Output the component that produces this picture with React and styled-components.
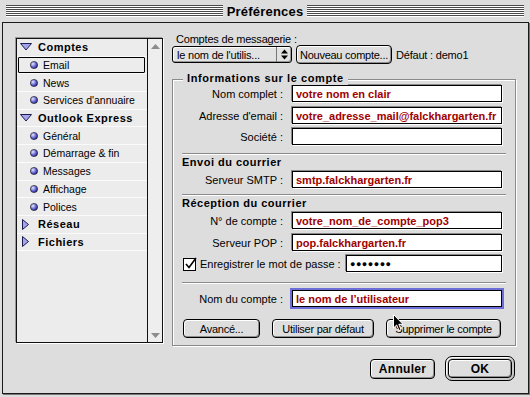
import React from 'react';
import styled, { createGlobalStyle } from 'styled-components';

const GlobalStyle = createGlobalStyle`
  body {
    margin: 0;
    background: #dddddd;
    font-family: "Liberation Sans", Arial, sans-serif;
    font-size: 11px;
    color: #000;
  }
  * { box-sizing: border-box; }
`;

const Window = styled.div`
  position: relative;
  width: 530px;
  height: 397px;
  background: #dddddd;
  overflow: hidden;
`;

const TitleBar = styled.div`
  height: 22px;
  display: flex;
  align-items: center;
  gap: 4px;
  padding: 0 6px;
`;

const Stripes = styled.div`
  flex: 1;
  height: 12px;
  background: repeating-linear-gradient(to bottom, #4a4a4a 0 1px, #ffffff 1px 2px);
`;

const Title = styled.div`
  font-weight: bold;
  font-size: 13px;
  letter-spacing: 0.2px;
`;

const Body = styled.div`
  margin-left: 2px;
  width: 527px;
  height: 372px;
  border: 1px solid #1a1a1a;
  box-shadow: 1px 1px 0 #777;
  padding: 10px 12px 12px 13px;
  display: flex;
  flex-direction: column;
`;

const Main = styled.div`
  display: flex;
  gap: 9px;
  height: 313px;
`;

const ListBox = styled.div`
  margin-top: 5px;
  width: 147px;
  height: 305px;
  border: 1px solid #111;
  display: flex;
  box-shadow: 1px 1px 0 #fff, -1px -1px 0 #9a9a9a;
`;

const ListRows = styled.div`
  flex: 1;
  background: #ececec;
  display: flex;
  flex-direction: column;
`;

const Row = styled.div`
  height: 17.7px;
  border-bottom: 1px solid #fbfbfb;
  display: flex;
  align-items: center;
  padding: 0 2px 0 1px;
`;

const RowInner = styled.div`
  flex: 1;
  height: 16px;
  display: flex;
  align-items: center;
  padding-left: 1px;
  border: 1px solid ${p => (p.$selected ? '#000' : 'transparent')};
  border-radius: 1px;
  font-weight: ${p => (p.$header ? 'bold' : 'normal')};
  font-size: ${p => (p.$header ? '11px' : '10.5px')};
  letter-spacing: ${p => (p.$header ? '0.5px' : '0')};
`;

const IconSlot = styled.div`
  width: ${p => p.$w}px;
  padding-left: ${p => p.$pad}px;
  display: flex;
  align-items: center;
`;

const Scrollbar = styled.div`
  width: 15px;
  border-left: 1px solid #111;
  background: #eeeeee;
  display: flex;
  flex-direction: column;
  justify-content: space-between;
`;

const ArrowBox = styled.div`
  height: 14px;
  display: flex;
  align-items: center;
  justify-content: center;
`;

const RightPanel = styled.div`
  width: 344px;
  display: flex;
  flex-direction: column;
`;

const TopLabel = styled.div`
  height: 12px;
  line-height: 12px;
  padding-left: 4px;
  letter-spacing: -0.2px;
`;

const AccountRow = styled.div`
  height: 19px;
  display: flex;
  align-items: center;
  gap: 4px;
`;

const Popup = styled.div`
  width: 120px;
  height: 17px;
  border: 1px solid #000;
  border-radius: 3px;
  background: #e2e2e2;
  box-shadow: inset 1px 1px 0 #fff, inset -1px -1px 0 #999;
  display: flex;
  align-items: center;
`;

const PopupText = styled.div`
  flex: 1;
  padding-left: 4px;
  white-space: nowrap;
  overflow: hidden;
  letter-spacing: -0.2px;
`;

const PopupArrows = styled.div`
  width: 15px;
  height: 100%;
  border-left: 1px solid #777;
  display: flex;
  align-items: center;
  justify-content: center;
`;

const Button = styled.div`
  width: ${p => p.$w}px;
  height: ${p => p.$h || 19}px;
  border: 1px solid #000;
  border-radius: 4px;
  background: #dedede;
  box-shadow: inset 1px 1px 0 #fff, inset -1px -1px 0 #8f8f8f;
  display: flex;
  align-items: center;
  justify-content: center;
  white-space: nowrap;
  font-weight: ${p => (p.$bold ? 'bold' : 'normal')};
  font-size: ${p => (p.$bold ? '12px' : '11px')};
  letter-spacing: ${p => (p.$bold ? '0.3px' : '-0.25px')};
`;

const DefaultText = styled.span`
  letter-spacing: -0.2px;
`;

const DefaultRing = styled.div`
  width: 70px;
  height: 25px;
  border: 1px solid #000;
  border-radius: 7px;
  padding: 2px;
  background: #c8c8c8;
  box-shadow: inset 1px 1px 0 #fff;
  display: flex;
`;

const GroupBox = styled.div`
  position: relative;
  margin-top: 15px;
  height: 267px;
  border: 1px solid #8a8a8a;
  box-shadow: inset 1px 1px 0 #fff, 1px 1px 0 #fff;
  padding: 5px 9px 7px 9px;
  display: flex;
  flex-direction: column;
`;

const GroupTitle = styled.div`
  position: absolute;
  top: -8px;
  left: 10px;
  padding: 0 4px;
  background: #dddddd;
  font-weight: bold;
  letter-spacing: 0.6px;
  line-height: 13px;
`;

const FieldRow = styled.div`
  display: grid;
  grid-template-columns: 101px 1fr;
  column-gap: 9px;
  align-items: center;
  height: 17px;
  padding-right: 4px;
  margin-top: ${p => p.$mt || 0}px;
`;

const Label = styled.div`
  text-align: right;
  white-space: nowrap;
`;

const Field = styled.div`
  height: 17px;
  border: 1px solid #000;
  background: #fff;
  box-shadow: ${p => (p.$focus ? '0 0 0 2px #6e6ed8' : '-1px -1px 0 #888, 1px 1px 0 #fff')};
  color: #a00000;
  font-weight: bold;
  padding-left: 3px;
  display: flex;
  align-items: center;
  white-space: nowrap;
  overflow: hidden;
  width: ${p => (p.$w ? `${p.$w}px` : 'auto')};
`;

const Separator = styled.div`
  height: 2px;
  border-top: 1px solid #8a8a8a;
  border-bottom: 1px solid #fff;
  margin-top: ${p => p.$mt}px;
`;

const SectionHead = styled.div`
  height: 13px;
  line-height: 13px;
  font-weight: bold;
  letter-spacing: 0.5px;
  margin: 1px 0 2px;
`;

const CheckRow = styled.div`
  display: flex;
  align-items: center;
  height: 17px;
  margin-top: 4px;
  padding: 0 4px 0 1px;
  gap: 3px;
`;

const Password = styled(Field)`
  color: #000;
  font-size: 9px;
  letter-spacing: 0.5px;
  margin-left: auto;
`;

const ButtonRow = styled.div`
  display: flex;
  justify-content: space-between;
  margin-top: 12px;
  padding: 0 5px 0 1px;
`;

const Footer = styled.div`
  display: flex;
  justify-content: flex-end;
  align-items: center;
  gap: 10px;
  margin-top: 10px;
  height: 25px;
  padding-right: 1px;
`;

const Cursor = styled.svg`
  position: absolute;
  left: 393px;
  top: 314px;
`;

const DownTriangle = () => (
  <svg width="12" height="8" viewBox="0 0 12 8">
    <polygon points="0.5,0.5 11.5,0.5 6,7" fill="#a4a4ec" stroke="#1c1c50" strokeWidth="1" />
  </svg>
);

const RightTriangle = () => (
  <svg width="7" height="11" viewBox="0 0 7 11">
    <polygon points="0.5,0.5 6.5,5.5 0.5,10.5" fill="#a4a4ec" stroke="#1c1c50" strokeWidth="1" />
  </svg>
);

const Ball = () => (
  <svg width="8" height="8" viewBox="0 0 8 8">
    <defs>
      <radialGradient id="ballg" cx="0.35" cy="0.35" r="0.7">
        <stop offset="0" stopColor="#e8e8ff" />
        <stop offset="0.5" stopColor="#7777dd" />
        <stop offset="1" stopColor="#222288" />
      </radialGradient>
    </defs>
    <circle cx="4" cy="4" r="3.6" fill="url(#ballg)" stroke="#111" strokeWidth="0.6" />
  </svg>
);

const Checkbox = () => (
  <svg width="14" height="14" viewBox="0 0 14 14">
    <rect x="0.5" y="1.5" width="12" height="12" fill="#fff" stroke="#000" />
    <path d="M3 7 L6 10.5 L13 1" fill="none" stroke="#000" strokeWidth="1.6" />
  </svg>
);

const UpDown = () => (
  <svg width="7" height="11" viewBox="0 0 7 11">
    <polygon points="3.5,0.5 7,4.5 0,4.5" fill="#000" />
    <polygon points="0,6.5 7,6.5 3.5,10.5" fill="#000" />
  </svg>
);

const ScrollArrow = ({ down }) => (
  <svg width="9" height="5" viewBox="0 0 9 5">
    <polygon points={down ? '0,0 9,0 4.5,5' : '0,5 9,5 4.5,0'} fill="#8c8c8c" />
  </svg>
);

const listItems = [
  { label: 'Comptes', kind: 'open' },
  { label: 'Email', kind: 'item', selected: true },
  { label: 'News', kind: 'item' },
  { label: "Services d'annuaire", kind: 'item' },
  { label: 'Outlook Express', kind: 'open' },
  { label: 'Général', kind: 'item' },
  { label: 'Démarrage & fin', kind: 'item' },
  { label: 'Messages', kind: 'item' },
  { label: 'Affichage', kind: 'item' },
  { label: 'Polices', kind: 'item' },
  { label: 'Réseau', kind: 'closed' },
  { label: 'Fichiers', kind: 'closed' },
];

const ListItem = ({ item }) => {
  const header = item.kind !== 'item';
  let icon;
  if (item.kind === 'open') icon = <IconSlot $w={18} $pad={0}><DownTriangle /></IconSlot>;
  else if (item.kind === 'closed') icon = <IconSlot $w={18} $pad={2}><RightTriangle /></IconSlot>;
  else icon = <IconSlot $w={23} $pad={10}><Ball /></IconSlot>;
  return (
    <Row>
      <RowInner $header={header} $selected={item.selected}>
        {icon}
        {item.label}
      </RowInner>
    </Row>
  );
};

export default function App() {
  return (
    <Window>
      <GlobalStyle />
      <TitleBar>
        <Stripes />
        <Title>Préférences</Title>
        <Stripes />
      </TitleBar>
      <Body>
        <Main>
          <ListBox>
            <ListRows>
              {listItems.map(item => (
                <ListItem key={item.label} item={item} />
              ))}
            </ListRows>
            <Scrollbar>
              <ArrowBox><ScrollArrow /></ArrowBox>
              <ArrowBox><ScrollArrow down /></ArrowBox>
            </Scrollbar>
          </ListBox>

          <RightPanel>
            <TopLabel>Comptes de messagerie :</TopLabel>
            <AccountRow>
              <Popup>
                <PopupText>le nom de l'utilis...</PopupText>
                <PopupArrows><UpDown /></PopupArrows>
              </Popup>
              <Button $w={96}>Nouveau compte...</Button>
              <DefaultText>Défaut : demo1</DefaultText>
            </AccountRow>

            <GroupBox>
              <GroupTitle>Informations sur le compte</GroupTitle>
              <FieldRow>
                <Label>Nom complet :</Label>
                <Field>votre nom en clair</Field>
              </FieldRow>
              <FieldRow $mt={5}>
                <Label>Adresse d'email :</Label>
                <Field>votre_adresse_mail@falckhargarten.fr</Field>
              </FieldRow>
              <FieldRow $mt={4}>
                <Label>Société :</Label>
                <Field />
              </FieldRow>

              <Separator $mt={8} />
              <SectionHead>Envoi du courrier</SectionHead>
              <FieldRow>
                <Label>Serveur SMTP :</Label>
                <Field>smtp.falckhargarten.fr</Field>
              </FieldRow>

              <Separator $mt={6} />
              <SectionHead>Réception du courrier</SectionHead>
              <FieldRow>
                <Label>N° de compte :</Label>
                <Field>votre_nom_de_compte_pop3</Field>
              </FieldRow>
              <FieldRow $mt={5}>
                <Label>Serveur POP :</Label>
                <Field>pop.falckhargarten.fr</Field>
              </FieldRow>
              <CheckRow>
                <Checkbox />
                <span>Enregistrer le mot de passe :</span>
                <Password $w={156}>●●●●●●●</Password>
              </CheckRow>

              <Separator $mt={10} />
              <FieldRow $mt={6}>
                <Label>Nom du compte :</Label>
                <Field $focus>le nom de l’utilisateur</Field>
              </FieldRow>

              <ButtonRow>
                <Button $w={77}>Avancé...</Button>
                <Button $w={102}>Utiliser par défaut</Button>
                <Button $w={115}>Supprimer le compte</Button>
              </ButtonRow>
            </GroupBox>
          </RightPanel>
        </Main>

        <Footer>
          <Button $w={65} $h={20} $bold>Annuler</Button>
          <DefaultRing>
            <Button $w={64} $h={19} $bold>OK</Button>
          </DefaultRing>
        </Footer>
      </Body>
      <Cursor width="12" height="18" viewBox="0 0 12 18">
        <path d="M0.5 0.5 L0.5 14 L3.7 11 L6 16.5 L8 15.6 L5.8 10.3 L10 10.3 Z" fill="#000" stroke="#fff" strokeWidth="1" />
      </Cursor>
    </Window>
  );
}
